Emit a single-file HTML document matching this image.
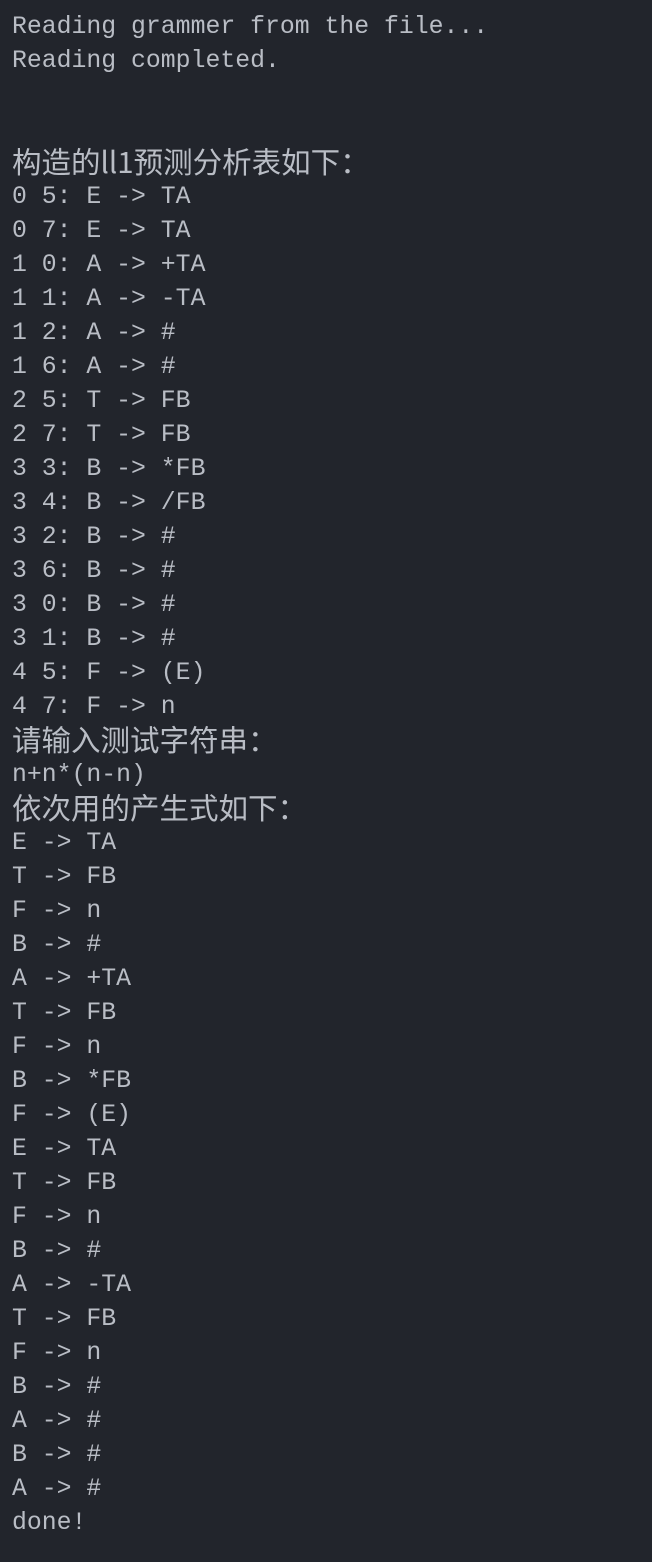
<!DOCTYPE html>
<html><head><meta charset="utf-8"><style>
html,body{margin:0;padding:0;background:#22252c;width:652px;height:1562px;overflow:hidden}
.t{padding:10px 0 0 12px;font-family:"Liberation Mono","Noto Sans CJK SC",monospace;font-size:24.8px;color:#b9bdc5}
.t div{height:34px;line-height:34px;white-space:pre;overflow:visible}
.t .c{font-family:"Noto Sans CJK SC",sans-serif;font-size:29.5px;position:relative;top:-2px}
</style></head><body><div class="t">
<div>Reading grammer from the file...</div>
<div>Reading completed.</div>
<div></div>
<div></div>
<div class="c">构造的ll1预测分析表如下：</div>
<div>0 5: E -> TA</div>
<div>0 7: E -> TA</div>
<div>1 0: A -> +TA</div>
<div>1 1: A -> -TA</div>
<div>1 2: A -> #</div>
<div>1 6: A -> #</div>
<div>2 5: T -> FB</div>
<div>2 7: T -> FB</div>
<div>3 3: B -> *FB</div>
<div>3 4: B -> /FB</div>
<div>3 2: B -> #</div>
<div>3 6: B -> #</div>
<div>3 0: B -> #</div>
<div>3 1: B -> #</div>
<div>4 5: F -> (E)</div>
<div>4 7: F -> n</div>
<div class="c">请输入测试字符串：</div>
<div>n+n*(n-n)</div>
<div class="c">依次用的产生式如下：</div>
<div>E -> TA</div>
<div>T -> FB</div>
<div>F -> n</div>
<div>B -> #</div>
<div>A -> +TA</div>
<div>T -> FB</div>
<div>F -> n</div>
<div>B -> *FB</div>
<div>F -> (E)</div>
<div>E -> TA</div>
<div>T -> FB</div>
<div>F -> n</div>
<div>B -> #</div>
<div>A -> -TA</div>
<div>T -> FB</div>
<div>F -> n</div>
<div>B -> #</div>
<div>A -> #</div>
<div>B -> #</div>
<div>A -> #</div>
<div>done!</div>
</div></body></html>
